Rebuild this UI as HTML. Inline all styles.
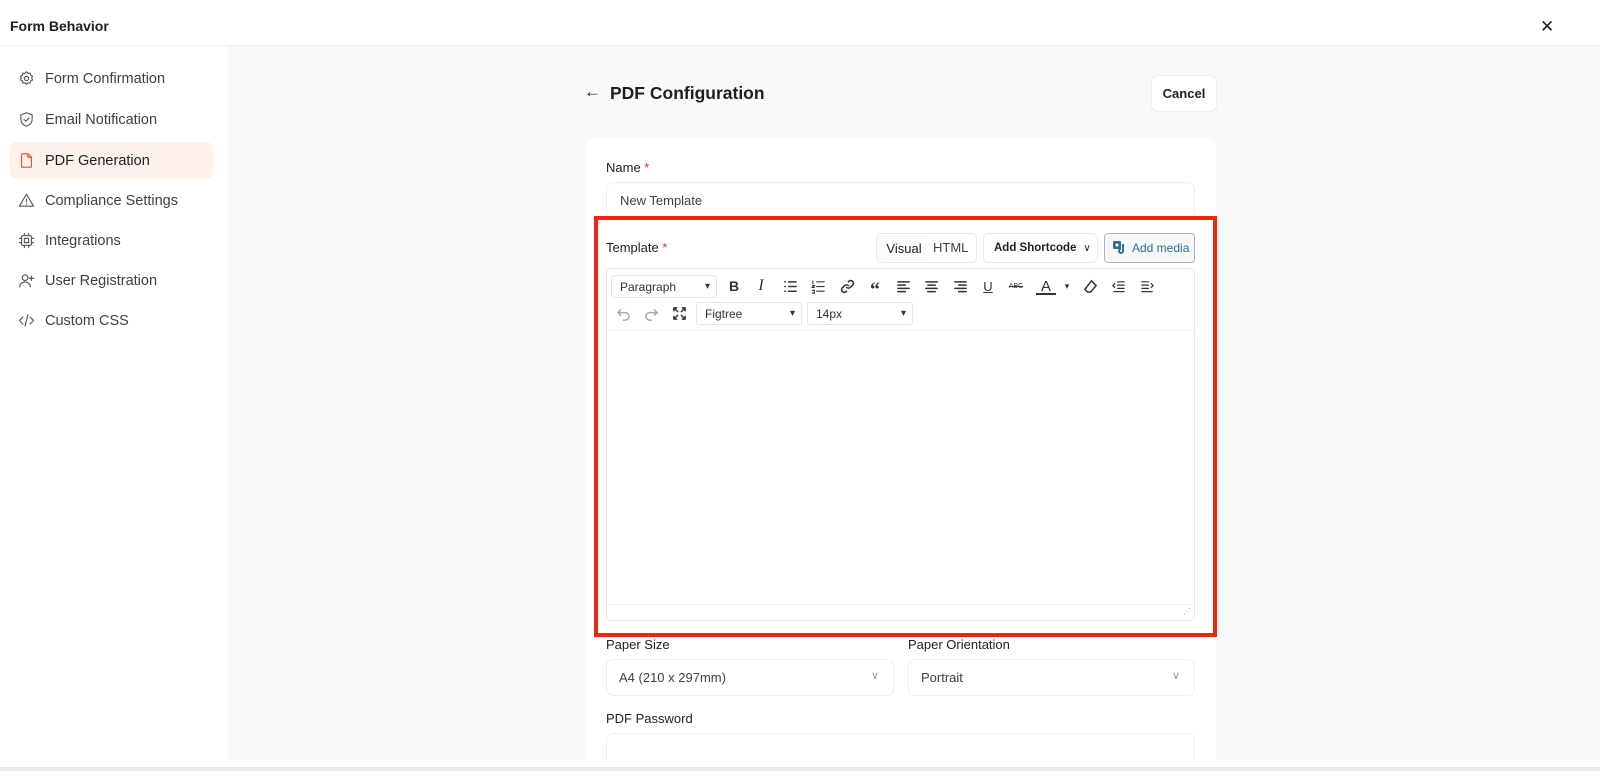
<!DOCTYPE html>
<html><head><meta charset="utf-8"><style>
*{box-sizing:border-box;margin:0;padding:0}
body{width:1600px;height:771px;overflow:hidden;background:#fff;font-family:"Liberation Sans",sans-serif;color:#1d1f23;position:relative}
.a{position:absolute}
.hdr{left:0;top:0;width:1600px;height:46px;border-bottom:1px solid #eceef0;background:#fff}
.side{left:0;top:46px;width:228px;height:725px;background:#fff}
.main{left:228px;top:46px;width:1372px;height:714px;background:#f7f9fa}
.bot{left:0;top:767px;width:1600px;height:4px;background:#e8eaec}
.nav{left:10px;width:203px;height:37px;border-radius:7px;font-size:14.5px;color:#3c4048;display:flex;align-items:center;padding-left:8px}
.nav svg{width:17px;height:17px;margin-right:10px;fill:none;stroke:#55595f;stroke-width:1.6;stroke-linecap:round;stroke-linejoin:round}
.nav.on{background:#fdf1ec;color:#1d1f23}
.nav.on svg{stroke:#d9562b}
.card{left:586px;top:138px;width:630px;height:640px;background:#fff;border-radius:10px}
.lbl{font-size:13px;color:#1d1f23}
.req{color:#d9302b}
.inp{border:1px solid #eceef0;border-radius:7px;background:#fff;font-size:13px;color:#3b3f45;display:flex;align-items:center;padding-left:13px}
.ti{position:absolute;top:277px;width:20px;height:18px;display:flex;align-items:center;justify-content:center;font-size:14px;color:#333}
.ti svg{width:15px;height:15px;fill:none;stroke:#333;stroke-width:1.6;stroke-linecap:round}
.sel{border:1px solid #e2e4e6;border-radius:3px;font-size:12px;color:#333;display:flex;align-items:center;padding-left:8px}
.sel:after{content:"▾";position:absolute;right:6px;font-size:10px}
</style></head><body>
<div class="a hdr"></div>
<div class="a" style="left:10px;top:18px;font-size:14px;font-weight:bold">Form Behavior</div>
<div class="a" style="left:1540px;top:17px;font-size:17px;color:#222">✕</div>
<div class="a side"></div>
<div class="a main"></div>
<div class="a bot"></div>

<div class="a nav" style="top:60px"><svg viewBox="0 0 24 24"><circle cx="12" cy="12" r="3"/><path d="M12 2.5l2 2.3 3-.5.8 2.9 2.7 1.4-1.2 2.8 1.2 2.8-2.7 1.4-.8 2.9-3-.5-2 2.3-2-2.3-3 .5-.8-2.9-2.7-1.4 1.2-2.8-1.2-2.8 2.7-1.4.8-2.9 3 .5z"/></svg>Form Confirmation</div>
<div class="a nav" style="top:101px"><svg viewBox="0 0 24 24"><path d="M12 2.5l8 3v6c0 5-3.5 8.5-8 10-4.5-1.5-8-5-8-10v-6z"/><path d="M8.5 12l2.5 2.5 4.5-4.5"/></svg>Email Notification</div>
<div class="a nav on" style="top:142px"><svg viewBox="0 0 24 24"><path d="M6 2.5h8l5 5v13a1 1 0 01-1 1H6a1 1 0 01-1-1v-17a1 1 0 011-1z"/><path d="M14 2.5v5h5"/></svg>PDF Generation</div>
<div class="a nav" style="top:182px"><svg viewBox="0 0 24 24"><path d="M12 3l10 17H2z"/><path d="M12 10v4M12 17v.5"/></svg>Compliance Settings</div>
<div class="a nav" style="top:222px"><svg viewBox="0 0 24 24"><rect x="5" y="5" width="14" height="14" rx="2"/><rect x="9" y="9" width="6" height="6"/><path d="M9 2v3M15 2v3M9 19v3M15 19v3M2 9h3M2 15h3M19 9h3M19 15h3"/></svg>Integrations</div>
<div class="a nav" style="top:262px"><svg viewBox="0 0 24 24"><circle cx="10" cy="8" r="4"/><path d="M2.5 21c0-4 3.5-7 7.5-7s7.5 3 7.5 7M19 6v6M16 9h6"/></svg>User Registration</div>
<div class="a nav" style="top:302px"><svg viewBox="0 0 24 24"><path d="M7 7l-5 5 5 5M17 7l5 5-5 5M14 4l-4 16"/></svg>Custom CSS</div>

<div class="a" style="left:584px;top:82px;font-size:17px">←</div>
<div class="a" style="left:610px;top:83px;font-size:17.5px;font-weight:bold">PDF Configuration</div>
<div class="a" style="left:1151px;top:75px;width:66px;height:37px;background:#fff;border:1px solid #eceef0;border-radius:7px;font-size:13px;font-weight:bold;display:flex;align-items:center;justify-content:center">Cancel</div>

<div class="a card"></div>
<div class="a lbl" style="left:606px;top:160px">Name <span class="req">*</span></div>
<div class="a inp" style="left:606px;top:182px;width:589px;height:36px">New Template</div>

<div class="a" style="left:594px;top:216px;width:623px;height:421px;border:4px solid #f2230f"></div>
<div class="a lbl" style="left:606px;top:240px">Template <span class="req">*</span></div>
<div class="a" style="left:876px;top:233px;width:101px;height:30px;border:1px solid #e8eaec;border-radius:6px;font-size:13px"><span class="a" style="left:1px;top:1px;width:52px;height:26px;background:#fafbfb;border-radius:5px;display:flex;align-items:center;justify-content:center;color:#1d1f23">Visual</span><span class="a" style="left:56px;top:6px;color:#444">HTML</span></div>
<div class="a" style="left:983px;top:233px;width:115px;height:30px;border:1px solid #e8eaec;border-radius:6px;font-size:11.5px;font-weight:bold;display:flex;align-items:center;padding-left:10px">Add Shortcode <span style="margin-left:7px;font-weight:normal;font-size:10px">∨</span></div>
<div class="a" style="left:1104px;top:233px;width:91px;height:30px;border:1px solid #a8b4bc;border-radius:4px;background:#f6f7f7;font-size:12px;color:#2c6f8f;display:flex;align-items:center;padding-left:8px"><svg width="15" height="14" viewBox="0 0 15 14" style="margin-right:4px"><rect x="0" y="0" width="8" height="8" rx="1.5" fill="#2c6f8f"/><circle cx="4" cy="4" r="1.5" fill="#fff"/><path d="M10 3v7a2 2 0 11-2-2" stroke="#2c6f8f" stroke-width="2" fill="none"/></svg>Add media</div>

<div class="a" style="left:606px;top:268px;width:589px;height:353px;border:1px solid #e6e8ea;border-radius:5px;background:#fff"></div>
<div class="a" style="left:607px;top:330px;width:587px;height:1px;background:#eceef0"></div>
<div class="a" style="left:607px;top:604px;width:587px;height:1px;background:#f0f1f2"></div>
<div class="a" style="left:1183px;top:607px;font-size:8px;color:#aaa">⋰</div>

<div class="a sel" style="left:611px;top:275px;width:106px;height:23px">Paragraph</div>
<div class="ti" style="left:724px;font-weight:bold">B</div>
<div class="ti" style="left:751px;font-style:italic;font-family:'Liberation Serif';font-size:16px">I</div>
<div class="ti" style="left:780px"><svg viewBox="0 0 16 16"><path d="M6 3h8M6 8h8M6 13h8M2 3h.5M2 8h.5M2 13h.5"/></svg></div>
<div class="ti" style="left:808px"><svg viewBox="0 0 16 16" style="stroke-width:1.2"><path d="M6 3h8M6 8h8M6 13h8M2 2v3M1.5 7h2l-2 2h2M1.5 12h2v3h-2"/></svg></div>
<div class="ti" style="left:837px"><svg viewBox="0 0 16 16"><path d="M7 9a3 3 0 004 0l3-3a3 3 0 00-4-4l-1 1M9 7a3 3 0 00-4 0l-3 3a3 3 0 004 4l1-1"/></svg></div>
<div class="ti" style="left:865px;font-weight:bold;font-size:20px;font-family:'Liberation Serif';padding-top:8px">“</div>
<div class="ti" style="left:893px"><svg viewBox="0 0 16 16"><path d="M2 3h12M2 6.5h8M2 10h12M2 13.5h8"/></svg></div>
<div class="ti" style="left:921px"><svg viewBox="0 0 16 16"><path d="M2 3h12M4 6.5h8M2 10h12M4 13.5h8"/></svg></div>
<div class="ti" style="left:950px"><svg viewBox="0 0 16 16"><path d="M2 3h12M6 6.5h8M2 10h12M6 13.5h8"/></svg></div>
<div class="ti" style="left:978px;text-decoration:underline;font-size:13px">U</div>
<div class="ti" style="left:1006px;font-size:7px;text-decoration:line-through">ABC</div>
<div class="ti" style="left:1036px;font-size:15px;border-bottom:2px solid #333;height:16px;top:279px">A</div>
<div class="ti" style="left:1057px;font-size:9px">▾</div>
<div class="ti" style="left:1080px"><svg viewBox="0 0 16 16"><path d="M9 2l5 5-6 7H5l-3-3z"/></svg></div>
<div class="ti" style="left:1108px"><svg viewBox="0 0 16 16" style="stroke-width:1.3"><path d="M7 3h7M7 6.5h7M7 10h7M3 13.5h11M4 5l-2 2 2 2"/></svg></div>
<div class="ti" style="left:1137px"><svg viewBox="0 0 16 16" style="stroke-width:1.3"><path d="M2 3h7M2 6.5h7M2 10h7M2 13.5h11M12 5l2 2-2 2"/></svg></div>

<div class="ti" style="left:613px;top:304px"><svg viewBox="0 0 16 16" style="stroke:#aaa"><path d="M5 4L2 7l3 3M2 7h8a4 4 0 010 8H8"/></svg></div>
<div class="ti" style="left:641px;top:304px"><svg viewBox="0 0 16 16" style="stroke:#aaa"><path d="M11 4l3 3-3 3M14 7H6a4 4 0 000 8h2"/></svg></div>
<div class="ti" style="left:669px;top:304px"><svg viewBox="0 0 16 16"><path d="M2 2l4 4M14 2l-4 4M2 14l4-4M14 14l-4-4M2 2h3M2 2v3M14 2h-3M14 2v3M2 14h3M2 14v-3M14 14h-3M14 14v-3"/></svg></div>
<div class="a sel" style="left:696px;top:302px;width:106px;height:23px">Figtree</div>
<div class="a sel" style="left:807px;top:302px;width:106px;height:23px">14px</div>

<div class="a lbl" style="left:606px;top:637px">Paper Size</div>
<div class="a lbl" style="left:908px;top:637px">Paper Orientation</div>
<div class="a inp" style="left:606px;top:659px;width:288px;height:37px;padding-left:12px">A4 (210 x 297mm)<span class="a" style="right:14px;top:9px;color:#999;font-size:11px">∨</span></div>
<div class="a inp" style="left:908px;top:659px;width:287px;height:37px;padding-left:12px">Portrait<span class="a" style="right:14px;top:9px;color:#999;font-size:11px">∨</span></div>
<div class="a lbl" style="left:606px;top:711px">PDF Password</div>
<div class="a inp" style="left:606px;top:733px;width:589px;height:36px"></div>
<div class="a" style="left:0;top:760px;width:1600px;height:11px;background:#fff"></div>
<div class="a bot"></div>
</body></html>
